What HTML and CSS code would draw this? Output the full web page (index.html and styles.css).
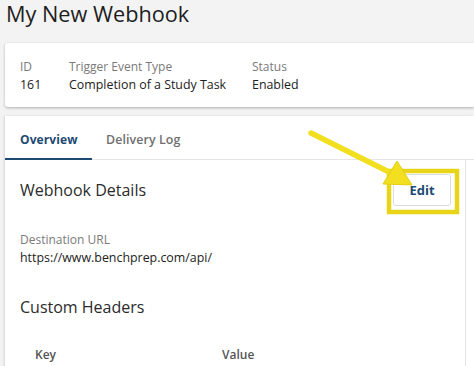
FILE: index.html
```html
<!DOCTYPE html>
<html lang="en">
<head>
    <meta charset="UTF-8">
    <title>My New Webhook</title>
    <link rel="stylesheet" href="styles.css">
</head>
<body>
    <h1 class="page-title">My New Webhook</h1>

    <section class="summary">
        <div class="summary__col summary__col_id">
            <div class="label">ID</div>
            <div class="value">161</div>
        </div>
        <div class="summary__col summary__col_trigger">
            <div class="label">Trigger Event Type</div>
            <div class="value">Completion of a Study Task</div>
        </div>
        <div class="summary__col">
            <div class="label">Status</div>
            <div class="value">Enabled</div>
        </div>
    </section>

    <section class="panel">
        <nav class="tabs">
            <a class="tab tab_active">Overview</a>
            <a class="tab">Delivery Log</a>
        </nav>
        <div class="panel__body">
            <div class="panel__head">
                <h2 class="section-title">Webhook Details</h2>
                <button type="button" class="btn">Edit</button>
            </div>
            <div class="field">
                <div class="label">Destination URL</div>
                <div class="value">https://www.benchprep.com/api/</div>
            </div>
            <h2 class="section-title section-title_headers">Custom Headers</h2>
            <div class="headers">
                <span class="headers__key">Key</span>
                <span class="headers__value">Value</span>
            </div>
        </div>
    </section>

    <!-- callout drawn over the screenshot -->
    <svg class="callout" width="474" height="366" viewBox="0 0 474 366" xmlns="http://www.w3.org/2000/svg">
        <rect x="389" y="171" width="68" height="41" fill="none" stroke="#e8d51a" stroke-width="4.5"/>
        <line x1="311" y1="133" x2="389" y2="172" stroke="#f2df1f" stroke-width="5.5" stroke-linecap="round"/>
        <polygon points="383,184 397,161 412,185" fill="#f2df1f" stroke="#e3cf17" stroke-width="1" stroke-linejoin="round"/>
    </svg>
</body>
</html>
```

FILE: styles.css
```css
* {
    box-sizing: border-box;
}
body {
    margin: 0;
    background-color: #f3f3f3;
    font-family: "Open Sans", "Liberation Sans", sans-serif;
    color: #222;
    position: relative;
    width: 474px;
    height: 366px;
    overflow: hidden;
}
.page-title {
    margin: 0;
    padding: 0 0 0 6px;
    height: 43px;
    font-size: 21.7px;
    line-height: 28px;
    font-weight: 500;
    color: #1e1e1e;
}
.summary {
    display: flex;
    margin-left: 5px;
    height: 64px;
    padding: 16px 15px 0;
    background-color: #fff;
    border-radius: 3px 0 0 3px;
    box-shadow: 0 1px 3px rgba(0, 0, 0, 0.28);
}
.summary__col_id {
    width: 49px;
}
.summary__col_trigger {
    width: 183px;
}
.label {
    font-size: 12px;
    line-height: 16px;
    color: #7a7a7a;
}
.value {
    margin-top: 1px;
    font-size: 12.4px;
    line-height: 18px;
    color: #222;
}
.panel {
    margin: 9px 0 0 5px;
    background-color: #fff;
    box-shadow: -1px 0 2px rgba(0, 0, 0, 0.12);
    height: 260px;
}
.tabs {
    display: flex;
    height: 44px;
    border-bottom: 1px solid #e6e6e6;
}
.tab {
    display: flex;
    align-items: center;
    padding: 4px 15px 0;
    font-size: 12.4px;
    font-weight: 600;
    color: #6f6f6f;
    letter-spacing: 0.1px;
}
.tab_active {
    color: #1d4a73;
    font-size: 12px;
    font-weight: 700;
    border-bottom: 2px solid #1d4a73;
    margin-bottom: -1px;
    width: 87px;
}
.tab + .tab {
    padding-left: 14px;
}
.panel__body {
    width: 461px;
    height: 215px;
    padding: 14px 14px 0 15px;
    border-right: 1px solid #e3e3e3;
}
.panel__head {
    display: flex;
    justify-content: space-between;
    align-items: center;
    height: 32px;
}
.section-title {
    margin: 0;
    font-size: 16px;
    line-height: 22px;
    font-weight: 400;
    color: #2b2b2b;
}
.btn {
    width: 58px;
    height: 32px;
    border: 1px solid #dcdcdc;
    border-radius: 3px;
    background-color: #fff;
    font-family: inherit;
    font-size: 13px;
    font-weight: 700;
    color: #1d4a73;
    padding: 0;
}
.field {
    margin-top: 26px;
}
.section-title_headers {
    margin-top: 29px;
}
.headers {
    display: flex;
    margin-top: 29px;
    padding-left: 15px;
    font-size: 12px;
    line-height: 16px;
    font-weight: 600;
    color: #555;
}
.headers__key {
    width: 187px;
}
.callout {
    position: absolute;
    left: 0;
    top: 0;
    pointer-events: none;
}
```
